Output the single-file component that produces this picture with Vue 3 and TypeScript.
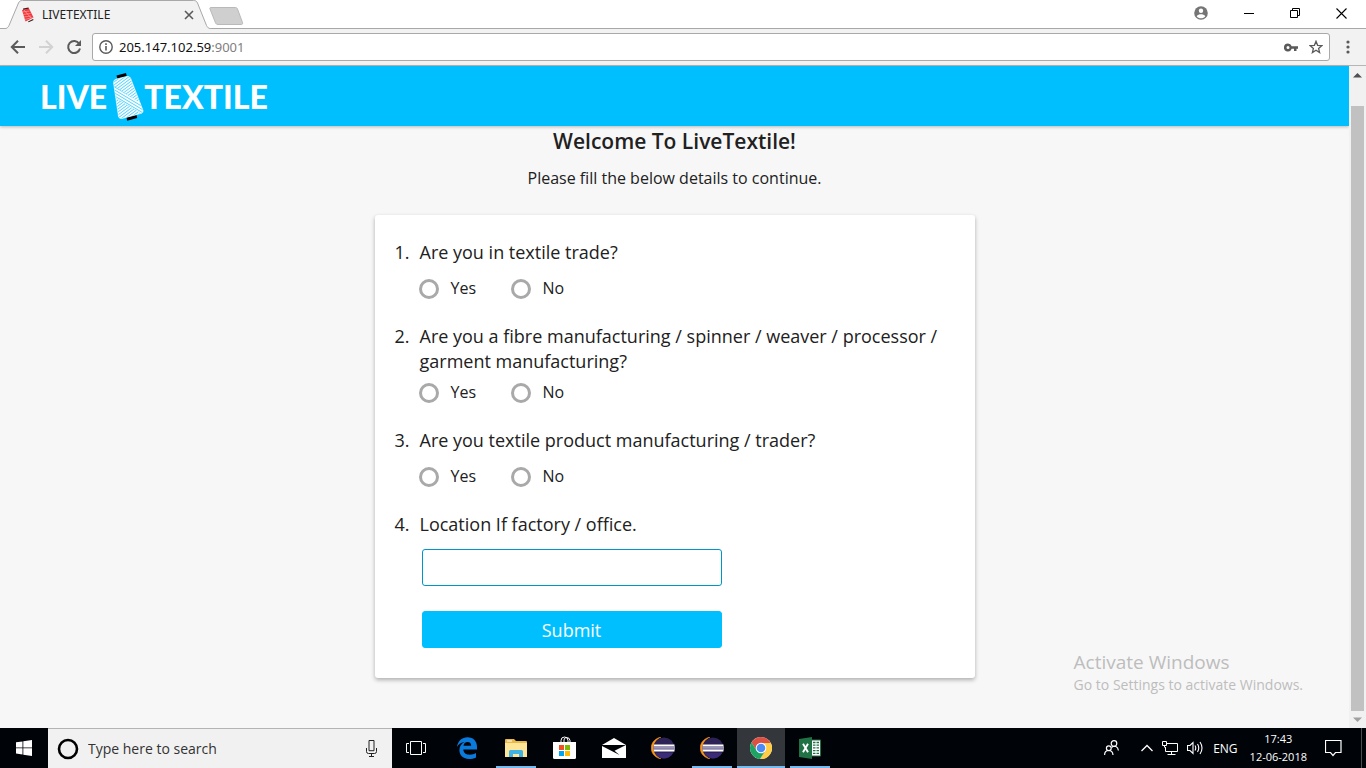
<script setup lang="ts">
import { reactive, ref } from 'vue'

interface Question {
  id: string
  text: string
}

interface TaskApp {
  name: string
  icon: 'edge' | 'folder' | 'store' | 'mail' | 'eclipse' | 'chrome' | 'excel'
  state: 'pinned' | 'running' | 'active'
}

const questions: Question[] = [
  { id: 'trade', text: 'Are you in textile trade?' },
  { id: 'maker', text: 'Are you a fibre manufacturing / spinner / weaver / processor / garment manufacturing?' },
  { id: 'trader', text: 'Are you textile product manufacturing / trader?' },
]

const choices = ['Yes', 'No']
const answers = reactive<Record<string, string>>({})
const location = ref('')
const search = ref('')

const apps: TaskApp[] = [
  { name: 'Edge', icon: 'edge', state: 'pinned' },
  { name: 'File Explorer', icon: 'folder', state: 'running' },
  { name: 'Store', icon: 'store', state: 'pinned' },
  { name: 'Mail', icon: 'mail', state: 'pinned' },
  { name: 'Eclipse', icon: 'eclipse', state: 'pinned' },
  { name: 'Eclipse workspace', icon: 'eclipse', state: 'running' },
  { name: 'Chrome', icon: 'chrome', state: 'active' },
  { name: 'Excel', icon: 'excel', state: 'running' },
]
</script>

<template>
  <div class="desktop">
    <div class="titlebar">
      <div class="tab">
        <svg class="tab-shape" viewBox="0 0 208 29" aria-hidden="true">
          <path d="M0 28.5h1c2 0 3-1 4-3L14.500 3c1-2 2-2.500 4-2.500h171c2 0 3 .5 4 2.500l9 22.500c1 2 2 3 4 3h1.500V29H0z" fill="#f2f2f2" />
          <path d="M0 28.5h1c2 0 3-1 4-3L14.500 3c1-2 2-2.500 4-2.500h171c2 0 3 .5 4 2.500l9 22.500c1 2 2 3 4 3h1.500" fill="none" stroke="#a8a8a8" />
        </svg>
        <svg class="favicon" width="16" height="16" viewBox="0 0 16 16" aria-hidden="true">
          <path d="M3 1.500L8.500.5l.3 1.500-5.500 1z" fill="#3b1a1c" />
          <path d="M2 3l7-1.500 4.500 9-8 4z" fill="#f0363c" />
          <path d="M2.500 5l7-1M3 7.500l7.500-1M3.800 10l7.500-1M4.600 12.500l8-2M4 3l7 8" stroke="#ffb3b3" stroke-width=".6" />
          <path d="M8 14.500l5-2.500.6 1-5 2.300z" fill="#3b1a1c" />
        </svg>
        <span class="tab-title">LIVETEXTILE</span>
        <button class="plain tab-close" aria-label="Close tab">
          <svg width="10" height="10" viewBox="0 0 10 10"><path d="M1 1l8 8M9 1L1 9" stroke="#5a5a5a" stroke-width="1.600" /></svg>
        </button>
      </div>
      <button class="plain new-tab" aria-label="New tab">
        <svg width="36" height="20" viewBox="0 0 36 20"><path d="M3 1.500h24.500c1 0 1.500.5 2 1.500l5 13.500c.4 1.300 0 2-1.200 2H10c-1.300 0-2-.5-2.500-1.700L2 3c-.4-1 0-1.500 1-1.500z" fill="#cfcfcf" stroke="#b9b9b9" /></svg>
      </button>
      <div class="window-buttons">
        <button class="plain" aria-label="Profile">
          <svg width="14" height="14" viewBox="0 0 14 14"><circle cx="7" cy="7" r="6.800" fill="#757575" /><circle cx="7" cy="4.700" r="2.200" fill="#fff" /><path d="M2.700 10.200C3.500 8.700 5.500 8.200 7 8.200s3.500.5 4.300 2C10.300 11.500 8.800 12.300 7 12.300s-3.300-.8-4.300-2.100z" fill="#fff" /></svg>
        </button>
        <button class="plain" aria-label="Minimize">
          <svg width="11" height="11" viewBox="0 0 11 11"><path d="M0 5.500h10" stroke="#000" /></svg>
        </button>
        <button class="plain" aria-label="Restore">
          <svg width="11" height="11" viewBox="0 0 11 11"><path d="M.5 2.500h7v7h-7zM2.500 2.500v-2h7v7h-2" fill="none" stroke="#000" /></svg>
        </button>
        <button class="plain" aria-label="Close">
          <svg width="11" height="11" viewBox="0 0 11 11"><path d="M.5.5l10 10M10.500.5l-10 10" stroke="#000" stroke-width="1.100" /></svg>
        </button>
      </div>
    </div>

    <div class="toolbar">
      <button class="plain nav" aria-label="Back">
        <svg width="16" height="16" viewBox="0 0 16 16"><path d="M15 8H2M8 1.800L1.800 8 8 14.200" fill="none" stroke="#5a5a5a" stroke-width="2" /></svg>
      </button>
      <button class="plain nav" aria-label="Forward">
        <svg width="16" height="16" viewBox="0 0 16 16"><path d="M1 8h13M8 1.800L14.200 8 8 14.200" fill="none" stroke="#d2d2d2" stroke-width="2" /></svg>
      </button>
      <button class="plain nav" aria-label="Reload">
        <svg width="16" height="16" viewBox="0 0 16 16"><path d="M13.200 4.700A6 6 0 1 0 14 9.500" fill="none" stroke="#5a5a5a" stroke-width="2" /><path d="M15 1v6H9z" fill="#5a5a5a" /></svg>
      </button>
      <div class="address">
        <svg width="14" height="14" viewBox="0 0 14 14" aria-hidden="true"><circle cx="7" cy="7" r="6.200" fill="none" stroke="#5a5a5a" stroke-width="1.400" /><path d="M7 6v4.500M7 3.200v1.700" stroke="#5a5a5a" stroke-width="1.600" /></svg>
        <span class="url">205.147.102.59<span class="port">:9001</span></span>
        <button class="plain" aria-label="Saved passwords">
          <svg width="14" height="9" viewBox="0 0 14 9"><path d="M4 .5a4 4 0 1 0 3.700 5.300H10V8h2.500V5.800H14V3.200H7.700A4 4 0 0 0 4 .5zm0 2.500a1.500 1.500 0 1 1 0 3 1.500 1.500 0 0 1 0-3z" fill="#5a5a5a" fill-rule="evenodd" /></svg>
        </button>
        <button class="plain" aria-label="Bookmark">
          <svg width="14" height="14" viewBox="0 0 14 14"><path d="M7 1.300l1.600 4 4.300.3-3.300 2.800 1 4.200L7 10.300l-3.600 2.300 1-4.200L1.100 5.600l4.300-.3z" fill="none" stroke="#5a5a5a" stroke-width="1.300" /></svg>
        </button>
      </div>
      <button class="plain more" aria-label="Menu">
        <svg width="4" height="14" viewBox="0 0 4 14"><circle cx="2" cy="2" r="1.600" fill="#5a5a5a" /><circle cx="2" cy="7" r="1.600" fill="#5a5a5a" /><circle cx="2" cy="12" r="1.600" fill="#5a5a5a" /></svg>
      </button>
    </div>

    <div class="viewport">
      <div class="page">
        <header class="site-header">
          <a class="logo" href="#">
            <span>LIVE</span>
            <svg width="32" height="50" viewBox="0 0 32 50" aria-hidden="true">
              <defs>
                <clipPath id="spool"><path d="M1.500 10.500Q1.500 8 4 7.200L15 4.500q2.500-.5 3.500 1.500L31 38.500q.5 2-1.500 2.800L10 46.500q-3 .5-3.500-2z" /></clipPath>
                <clipPath id="spool-top"><path d="M0 0h32v34L1 13z" /></clipPath>
                <clipPath id="spool-band"><path d="M0 12.500L32 33v10L2 25z" /></clipPath>
                <clipPath id="spool-base"><path d="M0 24L32 43v7H0z" /></clipPath>
              </defs>
              <path d="M4.500 3.500l9.500-2.500.7 3L5.300 6.500z" fill="#000" />
              <path d="M14.500 45.500l10-2.500.7 3-10 2.800z" fill="#000" />
              <g clip-path="url(#spool)" fill="none" stroke="#fff">
                <path clip-path="url(#spool-top)" stroke-width="1.500" d="M0 10L32-14M0 13L32-11M0 16L32-8M0 19L32-5M0 22L32-2M0 25L32 1M0 28L32 4M0 31L32 7M0 34L32 10M0 37L32 13M0 40L32 16M0 43L32 19M0 46L32 22M0 49L32 25M0 52L32 28" />
                <path clip-path="url(#spool-band)" stroke-width="1.700" d="M0 9L32 28M0 12L32 31M0 15L32 34M0 18L32 37M0 21L32 40M0 24L32 43" />
                <path clip-path="url(#spool-base)" stroke-width="1.500" d="M0 28L32 4M0 31L32 7M0 34L32 10M0 37L32 13M0 40L32 16M0 43L32 19M0 46L32 22M0 49L32 25M0 52L32 28M0 55L32 31M0 58L32 34M0 61L32 37M0 64L32 40" />
              </g>
              <path d="M1.500 10.500Q1.500 8 4 7.200L15 4.500q2.500-.5 3.500 1.500L31 38.500q.5 2-1.500 2.800L10 46.500q-3 .5-3.500-2z" fill="#fff" fill-opacity=".3" stroke="#fff" stroke-opacity=".6" />
            </svg>
            <span>TEXTILE</span>
          </a>
        </header>

        <main>
          <h1>Welcome To LiveTextile!</h1>
          <p class="lead">Please fill the below details to continue.</p>

          <form class="card" @submit.prevent>
            <ol>
              <li v-for="(q, i) in questions" :key="q.id">
                <span class="num">{{ i + 1 }}.</span>
                <fieldset>
                  <legend>{{ q.text }}</legend>
                  <div class="choices">
                    <label v-for="c in choices" :key="c">
                      <input v-model="answers[q.id]" type="radio" :name="q.id" :value="c" />
                      <span>{{ c }}</span>
                    </label>
                  </div>
                </fieldset>
              </li>
              <li>
                <span class="num">4.</span>
                <div class="place">
                  <label class="question" for="location">Location If factory / office.</label>
                  <input id="location" v-model="location" type="text" />
                  <button class="submit" type="submit">Submit</button>
                </div>
              </li>
            </ol>
          </form>
        </main>
      </div>

      <div class="scrollbar" aria-hidden="true">
        <svg width="9" height="5" viewBox="0 0 9 5"><path d="M4.500 0L9 4.500H0z" fill="#505050" /></svg>
        <div class="thumb"></div>
        <svg width="9" height="5" viewBox="0 0 9 5"><path d="M0 .5h9L4.500 5z" fill="#a0a0a0" /></svg>
      </div>

      <div class="watermark">
        <strong>Activate Windows</strong>
        <span>Go to Settings to activate Windows.</span>
      </div>
    </div>

    <div class="taskbar">
      <button class="plain start" aria-label="Start">
        <svg width="16" height="16" viewBox="0 0 16 16"><path d="M0 2.300l6.500-.9v6.100H0zM7.300 1.300L16 0v7.500H7.300zM0 8.300h6.500v6.200L0 13.600zM7.300 8.300H16V16l-8.700-1.300z" fill="#fff" /></svg>
      </button>
      <div class="search">
        <svg width="22" height="22" viewBox="0 0 22 22" aria-hidden="true"><circle cx="11" cy="11" r="9" fill="none" stroke="#000" stroke-width="2.600" /></svg>
        <input v-model="search" type="text" placeholder="Type here to search" aria-label="Type here to search" />
        <button class="plain" aria-label="Speak">
          <svg width="11" height="17" viewBox="0 0 11 17"><path d="M3 .5h5v10.200H3zM.5 8v3.500q0 2 2 2h6q2 0 2-2V8M5.500 13.500v3M3 16.500h5" fill="none" stroke="#222" /></svg>
        </button>
      </div>
      <div class="apps">
        <button class="plain app" aria-label="Task view">
          <svg width="20" height="14" viewBox="0 0 20 14"><path d="M4.500.5h11v13h-11zM3 2.500H.5v9H3M17 2.500h2.500v9H17" fill="none" stroke="#fff" /></svg>
        </button>
        <button v-for="app in apps" :key="app.name" class="plain app" :class="app.state" :aria-label="app.name">
          <svg v-if="app.icon === 'edge'" width="22" height="22" viewBox="0 0 22 22">
            <path d="M1 10C1.800 4 6 .3 11.500.3c6 0 9.500 4.200 9.500 9.500v2.700H7.300c.2 3.500 3 5.200 6.300 5.200 2.500 0 4.500-.6 6.400-1.700v4.500c-2 1-4.500 1.500-7 1.500-5.700 0-9.600-3.500-9.600-8.700 0-4 2-6.700 5.300-8.200C5 5.500 2.600 7.200 1 10zm6.500-1.200h7.700c0-2.500-1.300-3.900-3.700-3.900-2.200 0-3.700 1.600-4 3.900z" fill="#0a7bdc" fill-rule="evenodd" />
          </svg>
          <svg v-else-if="app.icon === 'folder'" width="22" height="20" viewBox="0 0 22 20">
            <path d="M0 2Q0 1 1 1h8l2 2h10q1 0 1 1v15H0z" fill="#e9b949" /><path d="M0 5h22v14H0z" fill="#ffe597" /><path d="M2 2.500h5v1H2z" fill="#fff" /><path d="M4 19v-5.500q0-1.500 1.500-1.500h11q1.500 0 1.500 1.500V19h-4v-3H8v3z" fill="#3fb1e3" />
          </svg>
          <svg v-else-if="app.icon === 'store'" width="24" height="24" viewBox="0 0 24 24">
            <path d="M8 6V4.500Q8 1 11.500 1T15 4.500V6" fill="none" stroke="#fff" /><path d="M11 6V4q0-2 2-2.500 4 0 4 3V6" fill="none" stroke="#fff" /><path d="M0 6h23v15.500q0 1.500-1.500 1.500h-20Q0 23 0 21.500z" fill="#fff" />
            <path d="M6 9h5v5H6z" fill="#f25022" /><path d="M12 9h5v5h-5z" fill="#7fba00" /><path d="M6 15h5v5H6z" fill="#00a4ef" /><path d="M12 15h5v5h-5z" fill="#ffb900" />
          </svg>
          <svg v-else-if="app.icon === 'mail'" width="24" height="20" viewBox="0 0 24 20">
            <path d="M0 7L12 0l12 7v13H0z" fill="#fff" /><path d="M0 7h24L12.500 12.700l5 4.300L0 8z" fill="#000308" />
          </svg>
          <svg v-else-if="app.icon === 'eclipse'" width="24" height="22" viewBox="0 0 24 22">
            <path d="M10 0C-3 3-3 19 10 22 0 17 0 5 10 0z" fill="#f7941e" stroke="#f7941e" stroke-width=".6" /><circle cx="13" cy="11" r="10.500" fill="#2c2255" /><path d="M4 16h18q-3 5-9 5.500-6-.5-9-5.500z" fill="#3c2b78" />
            <path d="M3 7.500h20.500v1.800H2.700z" fill="#fff" /><path d="M2.500 9.300H24v3.400H2.500z" fill="#b8b2cf" /><path d="M2.500 10.600H24v1H2.500z" fill="#6d6494" /><path d="M2.700 12.700h20.800v1.800H3z" fill="#fff" />
          </svg>
          <svg v-else-if="app.icon === 'chrome'" width="22" height="22" viewBox="0 0 22 22">
            <circle cx="11" cy="11" r="11" fill="#fff" /><path d="M1.500 5.500A11 11 0 0 1 20.500 5.500L20.900 6.500H11L6.500 13.500z" fill="#dd5144" /><path d="M20.700 6A11 11 0 0 1 10 22l5.500-9L14.500 6z" fill="#ffcd46" /><path d="M1.500 5.500A11 11 0 0 0 10 22l4.500-7-7.500-1z" fill="#1da362" />
            <circle cx="11" cy="11" r="5.300" fill="#fff" /><circle cx="11" cy="11" r="4.300" fill="#4c8bf5" />
          </svg>
          <svg v-else width="22" height="22" viewBox="0 0 22 22">
            <path d="M12 3h9.500v16H12z" fill="#fff" stroke="#207245" /><path d="M14 5.500h6M14 8.200h6M14 10.900h6M14 13.600h6M14 16.300h6" stroke="#207245" stroke-width="1.300" /><path d="M17 4v14" stroke="#fff" /><path d="M0 2l13-2v22L0 20z" fill="#207245" /><path d="M4 6.800l5 8.500M9 6.800l-5 8.500" stroke="#fff" stroke-width="1.900" />
          </svg>
        </button>
      </div>
      <div class="tray">
        <svg width="15" height="16" viewBox="0 0 15 16" aria-hidden="true"><g fill="none" stroke="#fff" stroke-width="1.200"><circle cx="10" cy="3.500" r="2.800" /><circle cx="4.800" cy="8.200" r="2.400" /><path d="M.6 15c0-6 8-6 8.400 0M7.500 7.500c3-2.500 6.500-1 6.900 3" /></g></svg>
        <svg width="12" height="8" viewBox="0 0 12 8" aria-hidden="true"><path d="M.5 7L6 1.500 11.500 7" fill="none" stroke="#fff" stroke-width="1.300" /></svg>
        <svg width="16" height="15" viewBox="0 0 16 15" aria-hidden="true"><path d="M5 2.500h10.500v8H3.500V6M.5.500h4v4h-4zM2.500 4.500v2M9.500 10.500v3M5.500 13.500h8" fill="none" stroke="#fff" /></svg>
        <svg width="17" height="14" viewBox="0 0 17 14" aria-hidden="true"><path d="M.5 4.500H3l3-3v11l-3-3H.500zM8 4.500q1.500 2.500 0 5M10.500 3q2.500 4 0 8M13 1q4 6 0 12" fill="none" stroke="#fff" stroke-width="1.100" /></svg>
        <span>ENG</span>
        <time datetime="2018-06-12T17:43"><span>17:43</span><span>12-06-2018</span></time>
        <svg class="note" width="17" height="17" viewBox="0 0 17 17" aria-hidden="true"><path d="M.5.5h15.500v12h-5.500L8 15.500l-2.500-3h-5z" fill="none" stroke="#fff" stroke-width="1.200" /></svg>
      </div>
    </div>
  </div>
</template>

<style>
body {
  margin: 0;
}
</style>

<style scoped>
.desktop {
  display: flex;
  flex-direction: column;
  min-height: 100vh;
  font-family: "Open Sans", "Noto Sans", sans-serif;
  color: #212121;
}
.plain {
  display: flex;
  align-items: center;
  justify-content: center;
  padding: 0;
  border: 0;
  background: none;
}
svg {
  display: block;
  flex: none;
}

/* Browser frame */
.titlebar {
  display: flex;
  height: 29px;
  background: linear-gradient(#a8a8a8, #a8a8a8) bottom / 100% 1px no-repeat #fff;
}
.tab {
  position: relative;
  display: flex;
  align-items: center;
  width: 208px;
  box-sizing: border-box;
  margin-left: 4px;
  padding: 0 17px 0 16px;
}
.tab-shape {
  position: absolute;
  inset: 0;
  width: 208px;
  height: 29px;
}
.favicon,
.tab-title,
.tab-close {
  position: relative;
}
.tab-title {
  flex: 1;
  margin-left: 6px;
  font: 12px/20px "Noto Sans", sans-serif;
  color: #222;
}
.tab-close {
  width: 12px;
}
.new-tab {
  width: 36px;
  height: 31px;
  margin-left: -4px;
}
.window-buttons {
  display: flex;
  margin-left: auto;
  padding-right: 2px;
}
.window-buttons button {
  width: 46px;
  height: 26px;
}
.window-buttons button:first-child {
  width: 50px;
}
.toolbar {
  display: flex;
  align-items: center;
  height: 37px;
  box-sizing: border-box;
  padding-left: 4px;
  background: #f2f2f2;
  border-bottom: 1px solid #b6b6b6;
}
.nav {
  width: 28px;
  height: 28px;
}
.address {
  flex: 1;
  display: flex;
  align-items: center;
  gap: 11px;
  height: 28px;
  box-sizing: border-box;
  margin-left: 4px;
  padding: 0 6px;
  background: #fff;
  border: 1px solid #a9a9a9;
  border-radius: 3px;
}
.url {
  flex: 1;
  margin-left: -5px;
  font: 13px/20px "Noto Sans", sans-serif;
  color: #111;
}
.port {
  color: #808080;
}
.more {
  width: 36px;
}

/* Web page */
.viewport {
  position: relative;
  flex: 1;
  display: flex;
}
.page {
  flex: 1;
  background: #f7f7f7;
}
.site-header {
  display: flex;
  align-items: center;
  height: 60px;
  background: #00bfff;
  box-shadow: 0 1px 3px rgba(0, 0, 0, 0.25);
}
.logo {
  display: flex;
  align-items: center;
  gap: 5px;
  margin-left: 40px;
  padding-top: 2px;
  color: #fff;
  font: 900 32px/40px Lato, sans-serif;
  text-decoration: none;
}
.logo span:last-child {
  margin-left: -5px;
}
h1 {
  margin: 0;
  font-size: 21px;
  font-weight: 600;
  line-height: 30px;
  text-align: center;
}
.lead {
  margin: 10px 0 25px;
  font-size: 16px;
  line-height: 24px;
  text-align: center;
}
.card {
  max-width: 600px;
  box-sizing: border-box;
  margin: 0 auto;
  padding: 25px 20px 30px;
  background: #fff;
  border-radius: 3px;
  box-shadow: 0 2px 4px rgba(0, 0, 0, 0.3);
}
ol {
  display: grid;
  gap: 25px;
  margin: 0;
  padding: 0;
  list-style: none;
}
li {
  display: grid;
  grid-template-columns: 25px 1fr;
  font-size: 18px;
  line-height: 25px;
}
fieldset {
  min-width: 0;
  margin: 0;
  padding: 0;
  border: 0;
}
legend,
.question {
  display: block;
  min-height: 30px;
  padding: 0;
}
.choices {
  display: flex;
  margin-left: -1px;
  padding-top: 9px;
}
.choices label {
  display: flex;
  align-items: flex-start;
  gap: 12px;
  width: 92px;
  height: 20px;
  font-size: 16px;
  line-height: 18px;
}
.choices input {
  appearance: none;
  width: 20px;
  height: 20px;
  box-sizing: border-box;
  margin: 0;
  border: 3px solid #a9a9a9;
  border-radius: 50%;
  background: #fff;
}
.choices input:checked {
  border-color: #00bfff;
  background: radial-gradient(#00bfff 4px, #fff 5px);
}
.place {
  max-width: 302px;
}
.place input,
.submit {
  display: block;
  width: calc(100% - 2px);
  height: 37px;
  box-sizing: border-box;
  margin: 7px 0 0 2px;
  border: 1px solid #0095c8;
  border-radius: 3px;
  padding: 0 10px;
  font: inherit;
}
.submit {
  margin-top: 25px;
  padding-top: 2px;
  border-color: #00bfff;
  background: #00bfff;
  color: #fff;
}
.scrollbar {
  display: flex;
  flex-direction: column;
  align-items: center;
  width: 17px;
  box-sizing: border-box;
  padding: 7px 0 6px;
  background: #f1f1f1;
}
.thumb {
  flex: 1;
  width: 13px;
  margin: 28px 0 6px;
  background: #c1c1c1;
}
.watermark {
  position: absolute;
  right: 63px;
  bottom: 32px;
  display: flex;
  flex-direction: column;
  color: #bdbdbd;
  font-size: 14px;
  line-height: 22px;
}
.watermark strong {
  font-size: 19px;
  font-weight: 400;
  line-height: 24px;
}

/* Taskbar */
.taskbar {
  display: flex;
  height: 40px;
  background: #000308;
  color: #fff;
}
.start {
  width: 48px;
}
.search {
  display: flex;
  align-items: center;
  width: 344px;
  box-sizing: border-box;
  padding: 0 15px 0 9px;
  background: #f1f1f1;
  border-top: 1px solid #b4b4b4;
}
.search input {
  flex: 1;
  min-width: 0;
  margin: 0;
  padding: 0 0 0 9px;
  border: 0;
  background: none;
  color: #333;
  font: 14px/20px "Open Sans", sans-serif;
}
.search input::placeholder {
  color: #333;
  opacity: 1;
}
.apps {
  display: flex;
  gap: 1px;
}
.app {
  width: 48px;
  height: 40px;
}
.app:first-child {
  margin-right: 2px;
}
.running {
  background: linear-gradient(#76b9ed, #76b9ed) bottom / 40px 2px no-repeat;
}
.active {
  background: linear-gradient(#76b9ed, #76b9ed) bottom / 100% 2px no-repeat #33373b;
}
.tray {
  display: flex;
  align-items: center;
  gap: 9px;
  margin-left: auto;
  margin-right: 4px;
  padding-right: 19px;
  border-right: 1px solid #4a4c50;
  font-size: 12px;
}
.tray svg:first-child {
  margin-right: 13px;
}
time {
  display: flex;
  flex-direction: column;
  margin: 0 9px 0 3px;
  font-size: 11px;
  line-height: 18px;
  text-align: center;
}
</style>
